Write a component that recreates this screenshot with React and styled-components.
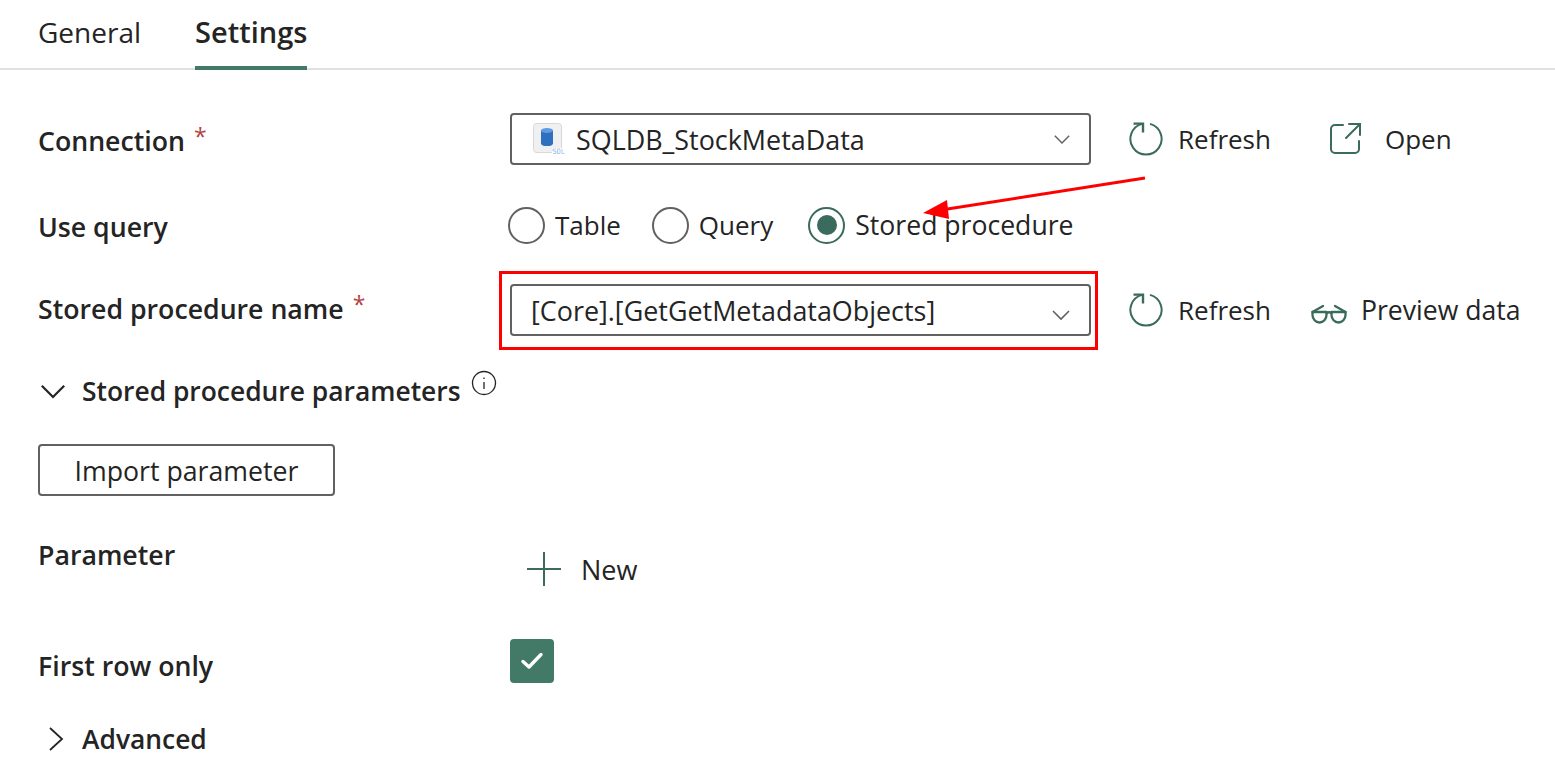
import React from 'react'
import styled, { createGlobalStyle } from 'styled-components'

const GREEN = '#3a6b5c'

const GlobalStyle = createGlobalStyle`
  html, body {
    margin: 0;
    background: #fff;
    color: #242424;
    font-family: "Open Sans", "Noto Sans", "Liberation Sans", sans-serif;
  }
`

const Page = styled.div`
  position: relative;
  width: 1555px;
  height: 783px;
  overflow: hidden;
`

const Tabs = styled.div`
  display: flex;
  gap: 54px;
  height: 68px;
  padding: 0 38px;
  border-bottom: 2px solid #e0e0e0;
`

const Tab = styled.div`
  height: 70px;
  box-sizing: border-box;
  padding-top: 12px;
  font-size: ${p => (p.$active ? 29 : 28)}px;
  line-height: 40px;
  font-weight: ${p => (p.$active ? 600 : 400)};
  border-bottom: ${p => (p.$active ? '4px solid #437a67' : 'none')};
`

const Form = styled.div`
  padding: 0 38px;
`

const Row = styled.div`
  display: flex;
  align-items: center;
  height: ${p => p.$h}px;
  margin-top: ${p => p.$top}px;
`

const Label = styled.div`
  width: 472px;
  flex: none;
  font-size: 26.7px;
  font-weight: 600;
  line-height: 36px;
  transform: translateY(${p => p.$shift || 0}px);
`

const Star = styled.span`
  color: #b3443f;
  margin-left: 9px;
  font-size: 23px;
  font-weight: 400;
  position: relative;
  top: -6px;
`

const SelectBox = styled.div`
  position: relative;
  display: flex;
  align-items: center;
  gap: 11px;
  width: 581px;
  height: 52px;
  flex: none;
  box-sizing: border-box;
  padding: 0 ${p => p.$right}px 0 ${p => p.$left}px;
  border: 2px solid #616161;
  border-radius: 4px;
  font-size: 26.9px;
`

const SelectText = styled.span`
  flex: 1;
  white-space: nowrap;
`

const Highlight = styled.div`
  position: absolute;
  inset: -15px -9px -16px -13px;
  border: 3px solid #f00;
  pointer-events: none;
`

const Action = styled.div`
  display: flex;
  align-items: center;
  flex: none;
  gap: ${p => p.$gap}px;
  margin-left: ${p => p.$left}px;
  font-size: ${p => p.$size || 26}px;
  white-space: nowrap;
`

const RadioGroup = styled.div`
  display: flex;
  align-items: center;
  margin: -2px 0 0 -2px;
`

const RadioItem = styled.div`
  display: flex;
  align-items: center;
  gap: 10px;
  margin-right: ${p => p.$after || 0}px;
  font-size: ${p => p.$size || 26}px;
`

const RadioDot = styled.span`
  display: flex;
  align-items: center;
  justify-content: center;
  width: 37px;
  height: 37px;
  box-sizing: border-box;
  border-radius: 50%;
  border: 2px solid ${p => (p.$on ? GREEN : '#616161')};

  &::after {
    content: '';
    display: ${p => (p.$on ? 'block' : 'none')};
    width: 20px;
    height: 20px;
    border-radius: 50%;
    background: ${GREEN};
  }
`

const Section = styled.div`
  display: flex;
  align-items: center;
  gap: ${p => p.$gap}px;
  padding-left: ${p => p.$left}px;
  height: 36px;
  margin-top: ${p => p.$top}px;
  font-size: 26.4px;
  font-weight: 600;
`

const Info = styled.svg`
  margin-left: -5px;
  transform: translateY(-8px);
`

const OutlineButton = styled.button`
  display: block;
  width: 297px;
  height: 52px;
  margin-top: 35px;
  padding: 0;
  background: #fff;
  border: 2px solid #616161;
  border-radius: 4px;
  color: #242424;
  font-family: inherit;
  font-size: 26.7px;
`

const NewAction = styled.div`
  display: flex;
  align-items: center;
  gap: 20px;
  margin-left: 17px;
  font-size: 27px;
  transform: translateY(14px);
`

const Checkbox = styled.div`
  display: flex;
  align-items: center;
  justify-content: center;
  width: 44px;
  height: 44px;
  border-radius: 4px;
  background: #437a67;
`

const GlassesSvg = styled.svg`
  margin-top: 8px;
`

const ChevronSvg = styled.svg`
  flex: none;
  margin-top: ${p => p.$drop || 0}px;
`

const ArrowSvg = styled.svg`
  position: absolute;
  left: 919px;
  top: 176px;
`

function RefreshIcon() {
  return (
    <svg width="36" height="36" viewBox="0 0 36 36" fill="none" stroke={GREEN} strokeWidth="2">
      <path d="M22 2.9A15.6 15.6 0 1 1 14 2.9" />
      <path d="M5.5 2.6H15V11.5" strokeWidth="2.4" />
    </svg>
  )
}

function OpenIcon() {
  return (
    <svg width="34" height="34" viewBox="0 0 34 34" fill="none" stroke={GREEN} strokeWidth="2" strokeLinecap="round">
      <path d="M14 3H6a4 4 0 0 0-4 4v20a4 4 0 0 0 4 4h20a4 4 0 0 0 4-4v-8" />
      <path d="M20 2h11v11M31 2 17 16" />
    </svg>
  )
}

function GlassesIcon() {
  return (
    <GlassesSvg width="36" height="22" viewBox="0 0 36 22" fill="none" stroke={GREEN} strokeWidth="2.3" strokeLinecap="round" strokeLinejoin="round">
      <path d="M1.5 9h14v3a7 7.5 0 0 1-14 0z" />
      <path d="M20.5 9h14v3a7 7.5 0 0 1-14 0z" />
      <path d="M15.5 10c1.6-1 3.4-1 5 0M1.5 9 12 3M34.5 9 24 3" />
    </GlassesSvg>
  )
}

function Chevron({ width = 18, color = '#616161', stroke = 1.6, drop = 0 }) {
  return (
    <ChevronSvg $drop={drop} width={width} height={width * 0.6} viewBox="0 0 20 12" fill="none" stroke={color} strokeWidth={stroke}>
      <path d="M2 2l8 8 8-8" />
    </ChevronSvg>
  )
}

function SqlIcon() {
  return (
    <svg width="32" height="32" viewBox="0 0 32 32">
      <rect x="0.5" y="0.5" width="28" height="29" rx="3" fill="#f0f0f0" stroke="#d8d8d8" />
      <path d="M8 7.5v13c0 1.6 2.7 2.6 6 2.6s6-1 6-2.6v-13z" fill="#2f6fc0" />
      <ellipse cx="14" cy="7.5" rx="6" ry="2.5" fill="#5f9be0" />
      <rect x="19" y="25" width="13" height="7" fill="#fff" />
      <path d="M23 26h-3v2h3v2.5h-3M24.5 26h2.5v4.5h-2.5zM29 26v4.5h2.5" fill="none" stroke="#8cb4e6" strokeWidth="0.7" />
    </svg>
  )
}

function Arrow() {
  return (
    <ArrowSvg width="240" height="50" viewBox="0 0 240 50">
      <path d="M226 2 22 34" stroke="#f00" strokeWidth="3" />
      <path d="M4 37 28 24 30 43z" fill="#f00" />
    </ArrowSvg>
  )
}

export default function App() {
  return (
    <Page>
      <GlobalStyle />
      <Tabs>
        <Tab>General</Tab>
        <Tab $active>Settings</Tab>
      </Tabs>
      <Form>
        <Row $h={52} $top={43}>
          <Label $shift={2}>Connection<Star>*</Star></Label>
          <SelectBox $left={21} $right={18}>
            <SqlIcon />
            <SelectText>SQLDB_StockMetaData</SelectText>
            <Chevron />
          </SelectBox>
          <Action $gap={14} $left={37}><RefreshIcon />Refresh</Action>
          <Action $gap={22} $left={58}><OpenIcon />Open</Action>
        </Row>
        <Row $h={52} $top={35}>
          <Label $shift={1}>Use query</Label>
          <RadioGroup>
            <RadioItem $after={31}><RadioDot />Table</RadioItem>
            <RadioItem $after={35}><RadioDot />Query</RadioItem>
            <RadioItem $size={26.6}><RadioDot $on />Stored procedure</RadioItem>
          </RadioGroup>
        </Row>
        <Row $h={52} $top={32}>
          <Label $shift={-1}>Stored procedure name<Star>*</Star></Label>
          <SelectBox $left={19} $right={18}>
            <Highlight />
            <SelectText>[Core].[GetGetMetadataObjects]</SelectText>
            <Chevron width={20} drop={9} />
          </SelectBox>
          <Action $gap={14} $left={37}><RefreshIcon />Refresh</Action>
          <Action $gap={14} $left={40} $size={26.6}><GlassesIcon />Preview data</Action>
        </Row>
        <Section $gap={15} $left={1} $top={37}>
          <Chevron width={28} color="#242424" stroke={1.6} />
          Stored procedure parameters
          <Info width="26" height="26" viewBox="0 0 26 26" fill="none" stroke="#242424" strokeWidth="1.3">
            <circle cx="13" cy="13" r="11.5" />
            <path d="M13 12v7M13 7.5v1.5" />
          </Info>
        </Section>
        <OutlineButton>Import parameter</OutlineButton>
        <Row $h={40} $top={39}>
          <Label>Parameter</Label>
          <NewAction>
            <svg width="34" height="34" viewBox="0 0 34 34" fill="none" stroke={GREEN} strokeWidth="2">
              <path d="M17 0v34M0 17h34" />
            </svg>
            New
          </NewAction>
        </Row>
        <Row $h={44} $top={64}>
          <Label $shift={5}>First row only</Label>
          <Checkbox>
            <svg width="24" height="20" viewBox="0 0 24 20" fill="none" stroke="#fff" strokeWidth="3.4" strokeLinecap="round" strokeLinejoin="round">
              <path d="M3 10.5 9 16 21 3.5" />
            </svg>
          </Checkbox>
        </Row>
        <Section $gap={17} $left={10} $top={38}>
          <svg width="17" height="26" viewBox="0 0 17 26" fill="none" stroke="#242424" strokeWidth="1.8">
            <path d="M2 2l12 11L2 24" />
          </svg>
          Advanced
        </Section>
      </Form>
      <Arrow />
    </Page>
  )
}
